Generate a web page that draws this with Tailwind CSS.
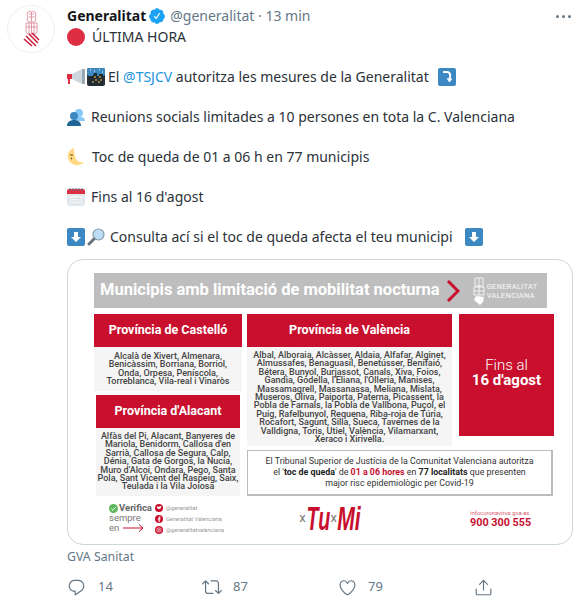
<!DOCTYPE html>
<html lang="en">
<head>
  <meta charset="UTF-8">
  <script src="https://cdn.jsdelivr.net/npm/@tailwindcss/browser@4"></script>
  <title>Generalitat</title>
</head>
<body class="bg-white font-['Noto_Sans',sans-serif] text-[#14171a] w-[588px] h-[602px] overflow-hidden">
  <div class="flex pl-[7px] pt-[5px]">
    <!-- avatar -->
    <div class="w-[48px] h-[48px] rounded-full border border-[#eef0f2] flex items-center justify-center shrink-0">
      <svg width="17" height="36" viewBox="0 0 17 36">
        <g fill="none" stroke="#dc8f9d" stroke-width=".9">
          <path d="M5 1c2-1 5-1 7 0l1 3-1 2 1 3-2 2H6L4 9l1-3-1-2z"/>
          <path d="M6 3h5M6 6h5M8.500 1v10"/>
          <path d="M3 12h11v9l-2 2H5l-2-2z"/>
          <path d="M8.500 12v11M3 16h11M6 12v11M11 12v11"/>
        </g>
        <g stroke="#c8102e" stroke-width="1.400">
          <path d="M9 22l7 7M6 23l9 9M3 25l10 10M1 28l8 7"/>
        </g>
      </svg>
    </div>
    <div class="ml-[12px] w-[506px]">
      <!-- header -->
      <div class="flex items-center h-[22px] text-[14px] leading-5">
        <span class="font-bold">Generalitat</span>
        <svg class="w-[18px] h-[18px] ml-[2px] mr-[4px]" viewBox="0 0 24 24" fill="#1da1f2"><path d="M22.5 12.5c0-1.58-.875-2.95-2.148-3.6.154-.435.238-.905.238-1.4 0-2.21-1.71-3.998-3.818-3.998-.47 0-.92.084-1.336.25C14.818 2.415 13.51 1.5 12 1.5s-2.816.917-3.437 2.25c-.415-.165-.866-.25-1.336-.25-2.11 0-3.818 1.79-3.818 4 0 .494.083.964.237 1.4-1.272.65-2.147 2.018-2.147 3.6 0 1.495.782 2.798 1.942 3.486-.02.17-.032.34-.032.514 0 2.21 1.708 4 3.818 4 .47 0 .92-.086 1.335-.25.62 1.334 1.926 2.25 3.437 2.25 1.512 0 2.818-.916 3.437-2.25.415.163.865.248 1.336.248 2.11 0 3.818-1.79 3.818-4 0-.174-.012-.344-.033-.513 1.158-.687 1.943-1.99 1.943-3.484zm-6.616-3.334l-4.334 6.5c-.145.217-.382.334-.625.334-.143 0-.288-.04-.416-.126l-.115-.094-2.415-2.415c-.293-.293-.293-.768 0-1.06s.768-.294 1.06 0l1.77 1.767 3.825-5.74c.23-.345.696-.436 1.04-.207.346.23.44.696.21 1.04z"/></svg>
        <span class="text-[#657786]">@generalitat · 13 min</span>
        <div class="ml-auto mr-[2px] flex gap-[3px]">
          <span class="w-[3px] h-[3px] rounded-full bg-[#657786]"></span>
          <span class="w-[3px] h-[3px] rounded-full bg-[#657786]"></span>
          <span class="w-[3px] h-[3px] rounded-full bg-[#657786]"></span>
        </div>
      </div>
      <!-- tweet text -->
      <div class="text-[14px] leading-5 text-[#2b3238] whitespace-nowrap">
        <p class="flex items-center h-5"><svg class="w-[18px] h-[18px] mr-[7px]" viewBox="0 0 18 18"><circle cx="9" cy="9" r="9" fill="#dd2e44"/></svg>ÚLTIMA HORA</p>
        <p class="flex items-center h-5 mt-5">
          <svg class="w-[18px] h-[18px] mr-[2px]" viewBox="0 0 18 18"><path d="M0 6h5v5H3v5H1v-5H0z" fill="#dd2e44"/><path d="M5 6l10-5v15L5 11z" fill="#ccd6dd"/><path d="M15 1l3 0v15h-3z" fill="#99aab5"/></svg>
          <svg class="w-[18px] h-[18px] mr-[3px]" viewBox="0 0 18 18"><rect width="18" height="18" rx="2" fill="#292f33"/><rect width="18" height="8" rx="2" fill="#3b88c3"/><path d="M2 18V8h4l1-3h3v13zM12 18V6h4v12z" fill="#1f2a33"/><path d="M8 8v2M9 11v2M6 13v2M13 8v2M14 11v2M12 13v2" stroke="#ffcc4d"/><path d="M3 2h1M7 3h1M12 2h1M15 4h1" stroke="#fff"/></svg>
          <span>El <span class="text-[#1b95e0]">@TSJCV</span> autoritza les mesures de la Generalitat</span>
          <svg class="w-[18px] h-[18px] ml-[9px]" viewBox="0 0 18 18"><rect width="18" height="18" rx="2" fill="#3b88c3"/><path d="M5 4h4c3 0 3.500 3 3 5l-.5 2" fill="none" stroke="#fff" stroke-width="2"/><path d="M8.500 10.500h6l-3 4z" fill="#fff"/></svg>
        </p>
        <p class="flex items-center h-5 mt-5">
          <svg class="w-[18px] h-[18px] mr-[6px]" viewBox="0 0 18 18"><circle cx="12" cy="5" r="4" fill="#88c9f9"/><path d="M7 13c0-3 2-4.500 5-4.500s6 1.500 6 4.500z" fill="#88c9f9"/><circle cx="7" cy="8" r="4" fill="#3b88c3"/><path d="M0 18c0-4 3-6 7-6s7 2 7 6z" fill="#226699"/></svg>
          <span>Reunions socials limitades a 10 persones en tota la C. Valenciana</span>
        </p>
        <p class="flex items-center h-5 mt-5">
          <svg class="w-[18px] h-[18px] mr-[7px]" viewBox="0 0 18 18"><path d="M7 0C2 2 0 6 1 10c1 5 6 8 11 7 2-.500 4-1 5-3-4 1-7-1-8-3C7.500 8 7 4 7 0z" fill="#ffd983"/><path d="M3 7h3M5 10l-1 1" stroke="#66471b" stroke-width="1.200"/></svg>
          <span>Toc de queda de 01 a 06 h en 77 municipis</span>
        </p>
        <p class="flex items-center h-5 mt-5">
          <svg class="w-[18px] h-[18px] mr-[6px]" viewBox="0 0 18 18"><rect y="1" width="18" height="17" rx="2" fill="#e1e8ed"/><path d="M0 3a2 2 0 012-2h14a2 2 0 012 2v3H0z" fill="#dd2e44"/><path d="M3 0v3M6 0v3M9 0v3M12 0v3M15 0v3" stroke="#66757f"/><path d="M3 8h12v7H3z" fill="#fff"/><path d="M5 8v7M8 8v7M11 8v7M13 8v7M3 10.500h12M3 13h12" stroke="#ccd6dd" stroke-width=".7"/></svg>
          <span>Fins al 16 d'agost</span>
        </p>
        <p class="flex items-center h-5 mt-5">
          <svg class="w-[18px] h-[18px] mr-[2px]" viewBox="0 0 18 18"><rect width="18" height="18" rx="2" fill="#3b88c3"/><path d="M7 4h4v5h3l-5 5-5-5h3z" fill="#fff"/></svg>
          <svg class="w-[18px] h-[18px] mr-[5px]" viewBox="0 0 18 18"><circle cx="11.500" cy="6.500" r="5.500" fill="#bbddf5" stroke="#8899a6" stroke-width="1.200"/><path d="M7 11l-5 5" stroke="#66757f" stroke-width="3" stroke-linecap="round"/></svg>
          <span>Consulta ací si el toc de queda afecta el teu municipi</span>
          <svg class="w-[18px] h-[18px] ml-[12px]" viewBox="0 0 18 18"><rect width="18" height="18" rx="2" fill="#3b88c3"/><path d="M7 4h4v5h3l-5 5-5-5h3z" fill="#fff"/></svg>
        </p>
      </div>
      <!-- card -->
      <div class="mt-[12px] w-[506px] h-[286px] border border-[#ccd6dd] rounded-2xl pl-[26px] pt-[13px] font-['Roboto',sans-serif] overflow-hidden">
        <div class="w-[453px] h-[35px] bg-[#bebebe] flex items-center pl-[6px] text-white">
          <span class="font-bold text-[16.5px] whitespace-nowrap">Municipis amb limitació de mobilitat nocturna</span>
          <svg class="ml-[6px] w-[14px] h-[22px]" viewBox="0 0 14 22"><path d="M2 1l10 10L2 21" fill="none" stroke="#c8102e" stroke-width="3"/></svg>
          <svg class="ml-[13px] w-[12px] h-[28px]" viewBox="0 0 12 28"><path d="M2 1h8v8H2zM1 10h10v8H1zM6 1v17M1 14h10" fill="none" stroke="#fff" stroke-width=".8"/><path d="M3 19l8 1-1 5-3 3-6-5z" fill="#fff"/></svg>
          <span class="ml-[2px] text-[7.5px] leading-[9px] tracking-[.3px] font-normal text-white/90">GENERALITAT<br>VALENCIANA</span>
        </div>
        <div class="flex mt-[6px] gap-[5px]">
          <!-- left column -->
          <div class="w-[148px]">
            <div class="h-[33px] bg-[#c8102e] text-white font-bold text-[12.5px] flex items-center justify-center">Província de Castelló</div>
            <div class="h-[44px] bg-[#f5f5f5] text-[#444] font-medium text-[9px] leading-[8.3px] text-center pt-[5px] whitespace-nowrap">Alcalà de Xivert, Almenara,<br>Benicàssim, Borriana, Borriol,<br>Onda, Orpesa, Peníscola,<br>Torreblanca, Vila-real i Vinaròs</div>
            <div class="mx-[2px] mt-[4px] h-[33px] bg-[#c8102e] text-white font-bold text-[12.5px] flex items-center justify-center">Província d'Alacant</div>
            <div class="mx-[2px] h-[68px] bg-[#f5f5f5] text-[#444] font-medium text-[9px] leading-[8.4px] text-center pt-[4px] whitespace-nowrap">Alfàs del Pi, Alacant, Banyeres de<br>Mariola, Benidorm, Callosa d'en<br>Sarrià, Callosa de Segura, Calp,<br>Dénia, Gata de Gorgos, la Nucia,<br>Muro d'Alcoi, Ondara, Pego, Santa<br>Pola, Sant Vicent del Raspeig, Saix,<br>Teulada i la Vila Joiosa</div>
          </div>
          <!-- right columns -->
          <div class="w-[307px]">
            <div class="flex gap-[7px]">
              <div class="w-[205px]">
                <div class="h-[33px] bg-[#c8102e] text-white font-bold text-[12.5px] flex items-center justify-center">Província de València</div>
                <div class="h-[99px] bg-[#f5f5f5] text-[#444] font-medium text-[9px] leading-[8.4px] text-center pt-[4px] whitespace-nowrap">Albal, Alboraia, Alcàsser, Aldaia, Alfafar, Alginet,<br>Almussafes, Benaguasil, Benetússer, Benifaió,<br>Bétera, Bunyol, Burjassot, Canals, Xiva, Foios,<br>Gandia, Godella, l'Eliana, l'Olleria, Manises,<br>Massamagrell, Massanassa, Meliana, Mislata,<br>Museros, Oliva, Paiporta, Paterna, Picassent, la<br>Pobla de Farnals, la Pobla de Vallbona, Puçol, el<br>Puig, Rafelbunyol, Requena, Riba-roja de Túria,<br>Rocafort, Sagunt, Silla, Sueca, Tavernes de la<br>Valldigna, Toris, Utiel, València, Vilamarxant,<br>Xeraco i Xirivella.</div>
              </div>
              <div class="w-[95px] h-[122px] bg-[#c8102e] text-white text-[15px] leading-[15px] flex flex-col items-center justify-center pb-[4px]">
                <span class="font-light">Fins al</span>
                <span class="font-bold">16 d'agost</span>
              </div>
            </div>
            <div class="mt-[4px] w-[306px] h-[46px] border border-[#bbb] border-r-2 border-b-2 text-[#333] text-[8.85px] leading-[11.3px] text-center flex flex-col justify-center whitespace-nowrap">
              <span>El Tribunal Superior de Justícia de la Comunitat Valenciana autoritza</span>
              <span>el '<b class="text-[#222]">toc de queda</b>' de <b class="text-[#c8102e]">01 a 06 hores</b> en <b class="text-[#222]">77 localitats</b> que presenten</span>
              <span>major risc epidemiològic per Covid-19</span>
            </div>
          </div>
        </div>
        <!-- footer of the image -->
        <div class="flex mt-[2px] h-[40px]">
          <div class="w-[61px] pl-[15px] pt-[5px] text-[#777] text-[9.500px] leading-[10px] shrink-0">
            <div class="flex items-center gap-[1px] text-[#666] font-bold whitespace-nowrap"><svg class="w-[9px] h-[9px] shrink-0" viewBox="0 0 9 9"><circle cx="4.500" cy="4.500" r="4.500" fill="#5cb85c"/><path d="M2.200 4.600l1.600 1.600 3-3" fill="none" stroke="#fff"/></svg>Verifica</div>
            <div>sempre</div>
            <div class="flex items-center">en<svg class="ml-[4px] w-[21px] h-[8px] shrink-0" viewBox="0 0 21 8"><path d="M0 4h20M16 .5L20 4l-4 3.500" fill="none" stroke="#c8102e"/></svg></div>
          </div>
          <div class="w-[75px] text-[#999] text-[5.6px] pt-[6px] flex flex-col gap-[3px] shrink-0 whitespace-nowrap">
            <div class="flex items-center gap-[3px] h-[8px]">
              <svg class="w-[8px] h-[8px] shrink-0" viewBox="0 0 8 8"><circle cx="4" cy="4" r="4" fill="#c8102e"/><path d="M1.800 3c.5 1.500 1.500 2.200 2.700 2 1-.2 1.500-1 1.600-2.200L6.500 2.500 5.800 2.300C5.200 1.800 4.300 2.200 4.300 3 3.500 3 2.700 2.700 2.100 2.200z" fill="#fff"/></svg>@generalitat</div>
            <div class="flex items-center gap-[3px] h-[8px]">
              <svg class="w-[8px] h-[8px] shrink-0" viewBox="0 0 8 8"><circle cx="4" cy="4" r="4" fill="#c8102e"/><path d="M4.700 7V4.400h.9l.1-1h-1v-.6c0-.3.1-.5.5-.5h.5v-.9h-.7c-.9 0-1.400.5-1.400 1.300v.7h-.8v1h.8V7z" fill="#fff"/></svg>Generalitat Valenciana</div>
            <div class="flex items-center gap-[3px] h-[8px]">
              <svg class="w-[8px] h-[8px] shrink-0" viewBox="0 0 8 8"><circle cx="4" cy="4" r="4" fill="#c8102e"/><rect x="2" y="2" width="4" height="4" rx="1" fill="none" stroke="#fff" stroke-width=".6"/><circle cx="4" cy="4" r=".9" fill="none" stroke="#fff" stroke-width=".5"/></svg>@generalitatvalenciana</div>
          </div>
          <div class="w-[200px] flex items-center justify-center font-['Liberation_Sans',sans-serif] italic text-[#c8102e] text-[34px] leading-[34px] whitespace-nowrap">
            <span class="not-italic font-['Roboto',sans-serif] text-[#777] text-[13px]">x</span><span class="font-bold inline-block scale-x-[.58] -mx-[8px]">Tu</span><span class="not-italic font-['Roboto',sans-serif] text-[#777] text-[13px]">x</span><span class="font-bold inline-block scale-x-[.62] -mx-[7px]">Mi</span>
          </div>
          <div class="ml-[40px] pt-[12px] text-[#c8102e] whitespace-nowrap">
            <div class="text-[5.9px] leading-[7px] opacity-70">infocoronavirus.gva.es</div>
            <div class="font-bold text-[10.800px] leading-[11px]">900 300 555</div>
          </div>
        </div>
      </div>
      <div class="mt-[2px] text-[12.3px] leading-5 text-[#657786]">GVA Sanitat</div>
      <!-- actions -->
      <div class="relative mt-[10px] h-[20px] text-[13px] text-[#657786]">
        <div class="flex items-center">
          <div class="w-[135px] flex items-center">
            <svg class="w-[19px] h-[19px]" viewBox="0 0 24 24" fill="#657786"><path d="M14.046 2.242l-4.148-.01h-.002c-4.374 0-7.8 3.427-7.8 7.802 0 4.098 3.186 7.206 7.465 7.37v3.828c0 .108.044.286.12.403.142.225.384.347.632.347.138 0 .277-.038.402-.118.264-.168 6.473-4.14 8.088-5.506 1.902-1.61 3.04-3.97 3.043-6.312v-.017c-.006-4.367-3.43-7.787-7.8-7.788zm3.787 12.972c-1.134.96-4.862 3.405-6.772 4.643V16.67c0-.414-.335-.75-.75-.75h-.396c-3.66 0-6.318-2.476-6.318-5.886 0-3.534 2.768-6.302 6.3-6.302l4.147.01h.002c3.532 0 6.3 2.766 6.302 6.296-.003 1.91-.942 3.844-2.514 5.176z"/></svg>
            <span class="ml-[12px]">14</span>
          </div>
          <div class="w-[136px] flex items-center">
            <svg class="w-[20px] h-[20px]" viewBox="0 0 24 24" fill="#657786"><path d="M23.77 15.67c-.292-.293-.767-.293-1.06 0l-2.22 2.22V7.65c0-2.068-1.683-3.75-3.75-3.75h-5.85c-.414 0-.75.336-.75.75s.336.75.75.75h5.85c1.24 0 2.25 1.01 2.25 2.25v10.24l-2.22-2.22c-.293-.293-.768-.293-1.06 0s-.294.768 0 1.06l3.5 3.5c.145.147.337.22.53.22s.383-.072.53-.22l3.5-3.5c.294-.292.294-.767 0-1.06zm-10.66 3.28H7.26c-1.24 0-2.25-1.01-2.25-2.25V6.46l2.22 2.22c.148.147.34.22.532.22s.384-.073.53-.22c.293-.293.293-.768 0-1.06l-3.5-3.5c-.293-.294-.768-.294-1.06 0l-3.5 3.5c-.294.292-.294.767 0 1.06s.767.293 1.06 0l2.22-2.22V16.7c0 2.068 1.683 3.75 3.75 3.75h5.85c.414 0 .75-.336.75-.75s-.337-.75-.75-.75z"/></svg>
            <span class="ml-[11px]">87</span>
          </div>
          <div class="w-[136px] flex items-center">
            <svg class="w-[19px] h-[19px]" viewBox="0 0 24 24" fill="#657786"><path d="M12 21.638h-.014C9.403 21.59 1.95 14.856 1.95 8.478c0-3.064 2.525-5.754 5.403-5.754 2.29 0 3.83 1.58 4.646 2.73.814-1.148 2.354-2.73 4.645-2.73 2.88 0 5.404 2.69 5.404 5.755 0 6.376-7.454 13.11-10.037 13.157H12zM7.354 4.225c-2.08 0-3.903 1.988-3.903 4.255 0 5.74 7.034 11.596 8.55 11.658 1.518-.062 8.55-5.917 8.55-11.658 0-2.267-1.823-4.255-3.903-4.255-2.528 0-3.94 2.936-3.952 2.965-.23.562-1.156.562-1.387 0-.014-.03-1.425-2.965-3.954-2.965z"/></svg>
            <span class="ml-[11px]">79</span>
          </div>
          <svg class="w-[19px] h-[19px]" viewBox="0 0 24 24" fill="#657786"><path d="M17.53 7.47l-5-5c-.293-.293-.768-.293-1.06 0l-5 5c-.294.293-.294.768 0 1.06s.767.294 1.06 0l3.72-3.72V15c0 .414.336.75.75.75s.75-.336.75-.75V4.81l3.72 3.72c.146.147.338.22.53.22s.384-.072.53-.22c.293-.293.293-.767 0-1.06z"/><path d="M19.708 21.944H4.292C3.028 21.944 2 20.916 2 19.652V14c0-.414.336-.75.75-.75s.75.336.75.75v5.652c0 .437.355.792.792.792h15.416c.437 0 .792-.355.792-.792V14c0-.414.336-.75.75-.75s.75.336.75.75v5.652c0 1.264-1.028 2.292-2.292 2.292z"/></svg>
        </div>
      </div>
    </div>
  </div>
</body>
</html>
